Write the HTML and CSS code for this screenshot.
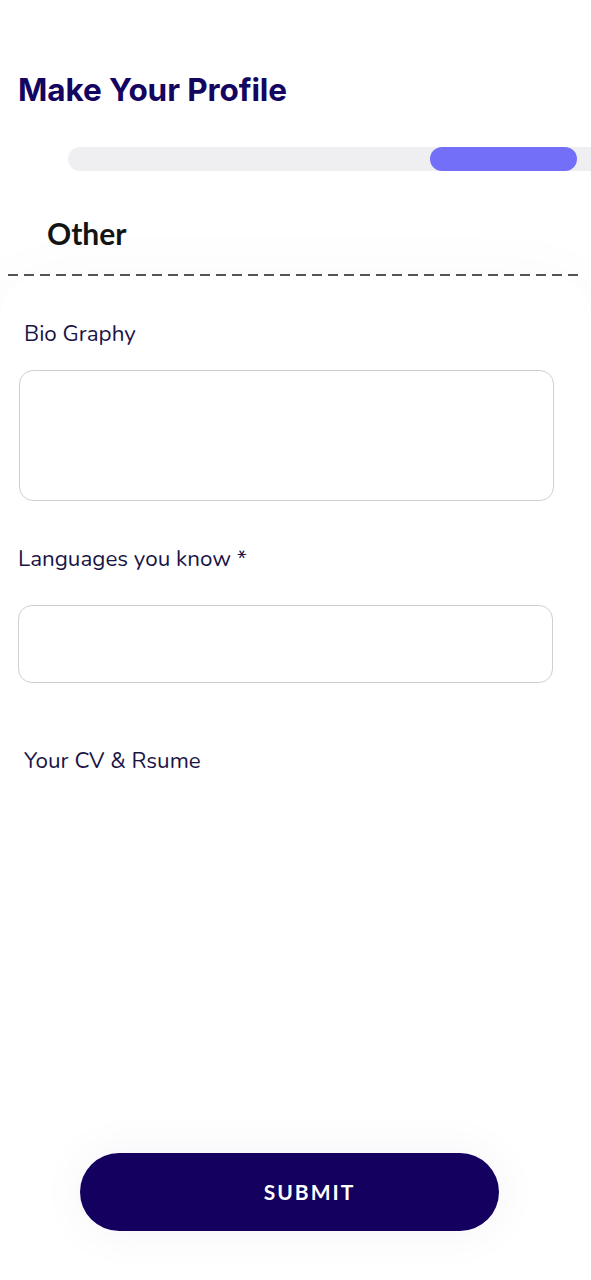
FILE: index.html
```html
<!DOCTYPE html>
<html>
<head>
<meta charset="utf-8">
<link rel="stylesheet" href="styles.css">
</head>
<body>
<div class="page">
  <h1 class="title">Make Your Profile</h1>
  <div class="progress"><div class="progress-fill"></div></div>
  <h2 class="section">Other</h2>
  <div class="divider"></div>
  <div class="card">
    <label class="label label-bio">Bio Graphy</label>
    <div class="textarea"></div>
    <label class="label label-lang">Languages you know *</label>
    <div class="input"></div>
    <label class="label label-cv">Your CV &amp; Rsume</label>
    <div class="spacer"></div>
    <div class="btn-row"><button class="submit">SUBMIT</button></div>
  </div>
</div>
</body>
</html>
```
FILE: styles.css
```css
html, body { margin: 0; padding: 0; background: #fff; }
body { width: 591px; height: 1280px; overflow: hidden; font-family: Lato, "Noto Sans", sans-serif; }
.page { display: flex; flex-direction: column; }
.title {
  margin: 70px 0 0 18px;
  font-family: Inter, sans-serif;
  font-weight: 700;
  font-size: 31.5px;
  line-height: 40px;
  color: #140560;
  letter-spacing: -0.1px;
}
.progress {
  margin: 37px 0 0 68px;
  height: 24px;
  width: 523px;
  background: #efeff1;
  border-radius: 12px 0 0 12px;
  position: relative;
}
.progress-fill {
  position: absolute;
  left: 362px;
  top: 0;
  width: 147px;
  height: 24px;
  background: #736ff9;
  border-radius: 12px;
}
.section {
  margin: 44px 0 0 47px;
  font-family: Lato, sans-serif;
  font-weight: 700;
  font-size: 30px;
  line-height: 36px;
  color: #141414;
}
.divider {
  margin: 23px 0 0 8px;
  width: 575px;
  height: 1.5px;
  background-image: linear-gradient(to right, #555 0 10px, transparent 10px 16px);
  background-size: 16px 1.5px;
}
.card {
  display: flex;
  flex-direction: column;
  box-shadow: 0 20px 90px rgba(40, 40, 120, 0.045);
  border-radius: 40px 40px 0 0;
  height: 1010px;
}
.label {
  font-family: "Nunito", Lato, sans-serif;
  font-size: 22.4px;
  line-height: 26px;
  color: #1a1446;
}
.label-bio { margin: 45px 0 0 24px; }
.textarea {
  box-sizing: border-box;
  margin: 23px 0 0 19px;
  width: 535px;
  height: 131px;
  border: 1.5px solid #cfcfd3;
  border-radius: 14px;
  background: #fff;
}
.label-lang { margin: 45px 0 0 18px; }
.input {
  box-sizing: border-box;
  margin: 33px 0 0 18px;
  width: 535px;
  height: 78px;
  border: 1.5px solid #cfcfd3;
  border-radius: 14px;
  background: #fff;
}
.label-cv { margin: 65px 0 0 24px; }
.spacer { height: 379px; }
.btn-row { display: flex; padding-left: 80px; }
.submit {
  width: 419px;
  height: 78px;
  padding: 0 0 0 40px;
  border: none;
  border-radius: 39px;
  background: #14005e;
  color: #fff;
  font-family: Lato, sans-serif;
  font-weight: 700;
  font-size: 21px;
  letter-spacing: 2px;
  box-shadow: 0 0 50px rgba(40, 40, 120, 0.05);
}
```
